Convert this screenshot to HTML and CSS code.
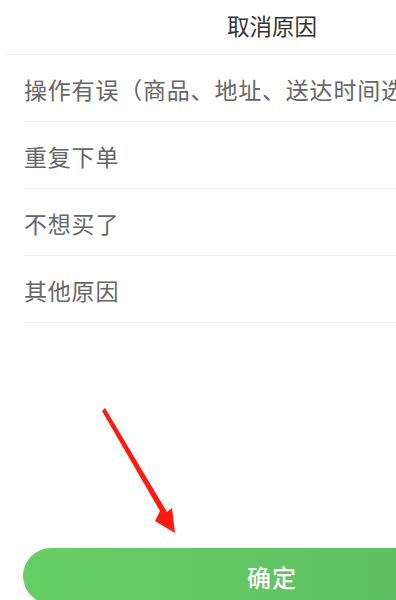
FILE: index.html
```html
<!DOCTYPE html>
<html lang="zh">
<head>
<meta charset="utf-8">
<link rel="stylesheet" href="styles.css">
</head>
<body>
<div class="sheet">
  <div class="header">取消原因</div>
  <ul class="reasons">
    <li class="reason">操作有误（商品、地址、送达时间选错了）</li>
    <li class="reason">重复下单</li>
    <li class="reason">不想买了</li>
    <li class="reason">其他原因</li>
  </ul>
  <div class="spacer"></div>
  <div class="footer"><button class="confirm">确定</button></div>
  <svg class="arrow" width="396" height="600" viewBox="0 0 396 600">
    <polygon points="102,411 160,511 155,521 175,533 172,508 167,512 105,408" fill="#ff1a0d"/>
  </svg>
</div>
</body>
</html>
```
FILE: styles.css
```css
html, body {
  margin: 0;
  padding: 0;
  width: 396px;
  height: 600px;
  overflow: hidden;
  background: #fff;
}
.sheet {
  position: relative;
  width: 544px;
  height: 600px;
  display: flex;
  flex-direction: column;
  font-family: "Noto Sans CJK SC", "Liberation Sans", sans-serif;
}
.header {
  height: 55px;
  margin: 0 6px;
  border-bottom: 1px solid #efefef;
  box-sizing: border-box;
  display: flex;
  align-items: center;
  justify-content: center;
  font-size: 22.5px;
  color: #333;
  padding-bottom: 4px;
}
.reasons {
  list-style: none;
  margin: 0;
  padding: 0 0 0 24px;
}
.reason {
  height: 67px;
  box-sizing: border-box;
  border-bottom: 1px solid #efefef;
  display: flex;
  align-items: center;
  font-size: 23px;
  letter-spacing: 0.8px;
  color: #666;
  white-space: nowrap;
  overflow: hidden;
  padding-top: 2px;
}
.spacer { flex: 1; }
.footer {
  padding: 0 23px;
  height: 52px;
}
.confirm {
  width: 100%;
  height: 56px;
  border: 0;
  border-radius: 28px;
  background: linear-gradient(to right, #67cd65, #5cbd62);
  color: #fff;
  font-family: "Noto Sans CJK SC", sans-serif;
  font-size: 24px;
  font-weight: 500;
  letter-spacing: 1px;
  padding: 0;
  display: block;
}
.arrow {
  position: absolute;
  left: 0;
  top: 0;
}
```
